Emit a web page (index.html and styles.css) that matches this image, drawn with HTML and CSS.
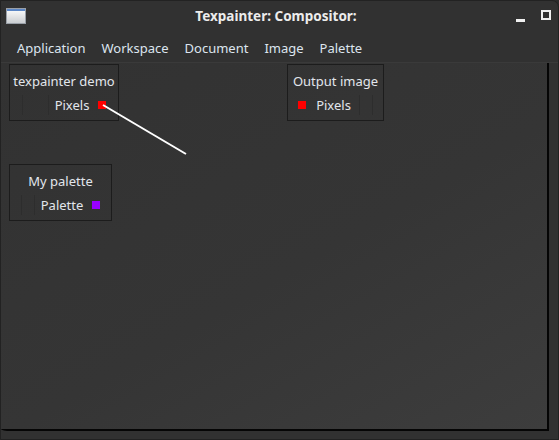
FILE: index.html
```html
<!DOCTYPE html>
<html>
<head>
<meta charset="utf-8">
<link rel="stylesheet" href="styles.css">
</head>
<body>
<div class="window">
  <div class="titlebar">
    <svg class="app-icon" width="20" height="16" viewBox="0 0 20 16">
      <defs>
        <linearGradient id="g" x1="0" y1="0" x2="0" y2="1">
          <stop offset="0" stop-color="#ffffff"/>
          <stop offset="1" stop-color="#c9ccd0"/>
        </linearGradient>
      </defs>
      <rect x="0.5" y="0.5" width="19" height="15" fill="url(#g)" stroke="#9aa0a8"/>
      <rect x="1" y="1" width="18" height="2" fill="#5b86c6"/>
    </svg>
    <div class="title">Texpainter: Compositor:</div>
    <div class="controls">
      <span class="min"></span>
      <span class="max"></span>
    </div>
  </div>
  <div class="menubar">
    <span class="menu">Application</span>
    <span class="menu">Workspace</span>
    <span class="menu">Document</span>
    <span class="menu">Image</span>
    <span class="menu">Palette</span>
  </div>
  <div class="canvas">
    <svg class="wires" width="559" height="380">
      <line x1="103" y1="42" x2="186" y2="91" stroke="#ffffff" stroke-width="2"/>
    </svg>
    <div class="node node-demo">
      <div class="node-title">texpainter demo</div>
      <div class="node-row">
        <span class="port-empty w27"></span>
        <span class="port-label">Pixels</span>
        <span class="pin red"></span>
      </div>
    </div>
    <div class="node node-output">
      <div class="node-title">Output image</div>
      <div class="node-row">
        <span class="pin red"></span>
        <span class="port-label">Pixels</span>
        <span class="port-empty w14"></span>
      </div>
    </div>
    <div class="node node-palette">
      <div class="node-title">My palette</div>
      <div class="node-row">
        <span class="port-empty w14"></span>
        <span class="port-label">Palette</span>
        <span class="pin purple"></span>
      </div>
    </div>
  </div>
</div>
</body>
</html>
```
FILE: styles.css
```css
html, body {
  margin: 0;
  padding: 0;
  background: #2b2b2b;
}
body {
  width: 559px;
  height: 440px;
  overflow: hidden;
  font-family: "Noto Sans", "Open Sans", sans-serif;
}
.window {
  width: 559px;
  height: 440px;
  background: #313131;
  border-top-right-radius: 7px;
  display: flex;
  flex-direction: column;
  box-sizing: border-box;
  border: 1px solid #222;
}
.titlebar {
  height: 30px;
  display: flex;
  align-items: center;
  position: relative;
  padding: 0 5px;
}
.title {
  flex: 1;
  text-align: center;
  color: #ececec;
  font-weight: bold;
  font-size: 13.5px;
  margin-left: 10px;
}
.controls {
  display: flex;
  align-items: center;
  gap: 16px;
  padding-right: 2px;
}
.min {
  width: 9px;
  height: 3px;
  background: #f0f0f0;
  margin-top: 8px;
}
.max {
  width: 6px;
  height: 6px;
  border: 2px solid #f0f0f0;
  margin-top: -2px;
}
.menubar {
  height: 32px;
  display: flex;
  align-items: center;
  padding-left: 16px;
  padding-top: 2px;
  box-sizing: border-box;
  gap: 16px;
  border-bottom: 1px solid #3a3a3a;
}
.menu {
  color: #dde5ef;
  font-size: 13px;
}
.canvas {
  flex: 1;
  position: relative;
  margin: 0 9px 8px 0;
  background: linear-gradient(150deg, #323232 0%, #353535 55%, #3d3d3d 100%);
  border-right: 2px solid #050505;
  border-bottom: 2px solid #050505;
  border-bottom-left-radius: 10px 2px;
}
.wires {
  position: absolute;
  left: -1px;
  top: 0;
  z-index: 2;
  pointer-events: none;
}
.node {
  position: absolute;
  border: 1px solid #1c1c1c;
  box-sizing: border-box;
  height: 57px;
  display: flex;
  flex-direction: column;
  align-items: center;
  color: #e2e6ec;
  font-size: 13px;
}
.node-title {
  margin-top: 8px;
  line-height: 17px;
}
.node-row {
  display: flex;
  align-items: center;
  height: 22px;
  margin-top: 4px;
}
.node-demo { left: 8px; top: 1px; width: 110px; }
.node-output { left: 286px; top: 1px; width: 97px; }
.node-palette { left: 8px; top: 101px; width: 103px; }
.port-empty {
  height: 20px;
  border-left: 1px solid #2d2d2d;
  border-right: 1px solid #2d2d2d;
  box-sizing: border-box;
}
.w27 { width: 27px; margin-right: 6px; }
.w14 { width: 14px; margin-right: 6px; }
.node-output .w14 { margin-right: 0; margin-left: 8px; }
.port-label {
  line-height: 17px;
}
.pin {
  width: 8px;
  height: 8px;
  display: inline-block;
}
.red { background: #ff0000; }
.purple { background: #9900ff; }
.node-demo .pin, .node-palette .pin { margin-left: 9px; }
.node-output .pin { margin-right: 10px; }
```
